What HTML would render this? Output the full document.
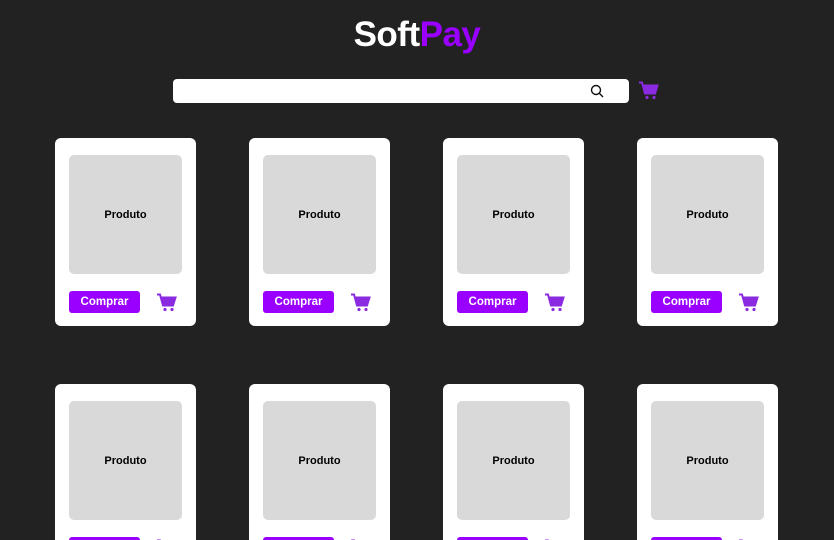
<!DOCTYPE html>
<html style="width:834px;height:540px;overflow:hidden"><head><meta charset="utf-8"><style>
*{margin:0;padding:0;box-sizing:border-box}
body{width:834px;height:540px;background:#222222;overflow:hidden;font-family:"Liberation Sans",Arial,sans-serif;position:relative}
.logo{position:absolute;left:0;width:834px;top:15px;text-align:center;font-size:35px;font-weight:bold;color:#fff;letter-spacing:-0.5px}
.logo span{color:#9900ff}
.search{position:absolute;left:173px;top:79px;width:456px;height:24px;background:#fff;border-radius:4px}
.search svg{position:absolute;left:417px;top:5px}
.topcart{position:absolute;left:638px;top:81px}
.card{position:absolute;width:141px;height:188px;background:#fff;border-radius:6px}
.img{position:absolute;left:14px;top:17px;width:113px;height:119px;background:#d9d9d9;border-radius:5px;display:flex;align-items:center;justify-content:center;font-size:11px;font-weight:bold;color:#000}
.btn{position:absolute;left:14px;top:153px;width:71px;height:22px;background:#9900ff;border-radius:3px;color:#fff;font-size:11.5px;font-weight:bold;display:flex;align-items:center;justify-content:center}
.cart{position:absolute;left:101px;top:155px}
</style></head><body>
<div class="logo">Soft<span>Pay</span></div>
<div class="search"><svg width="15" height="15" viewBox="0 0 15 15"><circle cx="6" cy="6" r="4.5" fill="none" stroke="#111" stroke-width="1.4"/><line x1="9.3" y1="9.3" x2="13" y2="13" stroke="#111" stroke-width="1.4"/></svg></div>
<svg class="topcart" width="21" height="19" viewBox="0 0 21 19"><path d="M1 1.5h3l3 11h10l2.5-8H5.5" fill="none" stroke="#8a2be2" stroke-width="2"/><path d="M5.5 4.5h14l-2.5 8H7.5z" fill="#8a2be2"/><circle cx="9" cy="16.5" r="1.6" fill="#8a2be2"/><circle cx="16" cy="16.5" r="1.6" fill="#8a2be2"/></svg>
<script>
const xs=[55,249,443,637],ys=[138,384];
let h='';
for(const y of ys)for(const x of xs)h+=`<div class="card" style="left:${x}px;top:${y}px"><div class="img">Produto</div><div class="btn">Comprar</div><svg class="cart" width="21" height="19" viewBox="0 0 21 19"><path d="M1 1.5h3l3 11h10l2.5-8H5.5" fill="none" stroke="#8a2be2" stroke-width="2"/><path d="M5.5 4.5h14l-2.5 8H7.5z" fill="#8a2be2"/><circle cx="9" cy="16.5" r="1.6" fill="#8a2be2"/><circle cx="16" cy="16.5" r="1.6" fill="#8a2be2"/></svg></div>`;
document.body.insertAdjacentHTML('beforeend',h);
</script>
</body></html>
